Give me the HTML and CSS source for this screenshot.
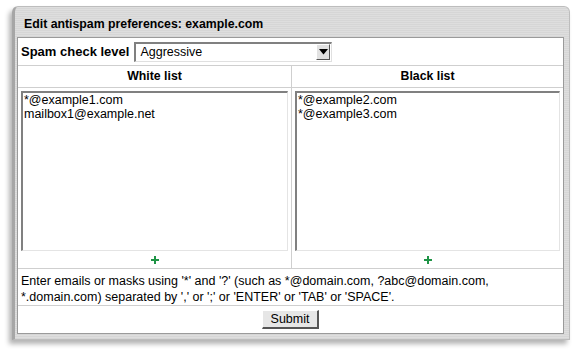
FILE: index.html
```html
<!DOCTYPE html>
<html>
<head>
<meta charset="utf-8">
<link rel="stylesheet" href="styles.css">
</head>
<body>
<div class="window">
  <div class="title">Edit antispam preferences: example.com</div>
  <div class="panel">
    <div class="row level">
      <span class="label">Spam check level</span>
      <div class="select"><span class="sel-text">Aggressive</span><span class="sel-btn"><svg width="9" height="6" viewBox="0 0 9 6"><path d="M0 0H9L4.5 5.5Z" fill="#000"/></svg></span></div>
    </div>
    <div class="lists">
      <div class="col">
        <div class="col-head">White list</div>
        <div class="col-body">
          <div class="textarea">*@example1.com<br>mailbox1@example.net</div>
          <div class="plus"><svg width="8" height="8" viewBox="0 0 8 8"><path d="M3 0H5V3H8V5H5V8H3V5H0V3H3Z" fill="#1f9446"/></svg></div>
        </div>
      </div>
      <div class="col right">
        <div class="col-head">Black list</div>
        <div class="col-body">
          <div class="textarea">*@example2.com<br>*@example3.com</div>
          <div class="plus"><svg width="8" height="8" viewBox="0 0 8 8"><path d="M3 0H5V3H8V5H5V8H3V5H0V3H3Z" fill="#1f9446"/></svg></div>
        </div>
      </div>
    </div>
    <div class="row help">Enter emails or masks using '*' and '?' (such as *@domain.com, ?abc@domain.com,<br>*.domain.com) separated by ',' or ';' or 'ENTER' or 'TAB' or 'SPACE'.</div>
    <div class="row submit-row"><button class="btn">Submit</button></div>
  </div>
</div>
</body>
</html>
```
FILE: styles.css
```css
html, body {
  margin: 0;
  padding: 0;
  background: #fff;
}
body {
  font-family: "Liberation Sans", Arial, sans-serif;
  font-size: 12.5px;
  color: #000;
  min-height: 353px;
}
.window {
  margin: 6px 0 0 12px;
  width: 547px;
  height: 327px;
  padding: 0 5px 5px 2px;
  background: repeating-linear-gradient(#dedede 0, #dedede 1px, #d6d6d6 1px, #d6d6d6 2px);
  border: 1px solid #bdbdbd;
  border-left: 3px solid #a6a6a6;
  border-radius: 6px 6px 0 0;
  box-shadow: -3px 4px 5px rgba(0,0,0,0.3);
  display: flex;
  flex-direction: column;
}
.title {
  height: 30px;
  box-sizing: border-box;
  padding: 9px 0 0 7px;
  line-height: 16px;
  font-weight: bold;
  font-size: 12.3px;
}
.panel {
  flex: 1;
  background: #fff;
  border: 1px solid #9a9a9a;
  display: flex;
  flex-direction: column;
}
.row {
  border-bottom: 1px solid #cfcfcf;
}
.level {
  height: 27px;
  display: flex;
  align-items: center;
  padding-left: 3px;
}
.label {
  font-weight: bold;
  font-size: 13px;
  margin-right: 5px;
}
.select {
  width: 195px;
  height: 17px;
  border-top: 2px solid #808080;
  border-left: 2px solid #808080;
  border-right: 1px solid #e0e0e0;
  border-bottom: 1px solid #e0e0e0;
  display: flex;
  align-items: center;
  justify-content: space-between;
}
.sel-text {
  padding-left: 4px;
}
.sel-btn {
  width: 12px;
  height: 14px;
  background: #e2e2e2;
  border-right: 1px solid #555;
  border-bottom: 1px solid #555;
  border-top: 1px solid #fff;
  border-left: 1px solid #fff;
  display: flex;
  align-items: center;
  justify-content: center;
  margin-right: 1px;
}
.lists {
  display: flex;
  border-bottom: 1px solid #cfcfcf;
  height: 202px;
}
.col {
  flex: 0 0 273px;
  display: flex;
  flex-direction: column;
}
.col.right {
  flex: 1;
  border-left: 1px solid #cfcfcf;
}
.col-head {
  height: 21px;
  line-height: 21px;
  text-align: center;
  font-weight: bold;
  font-size: 12.3px;
  border-bottom: 1px solid #cfcfcf;
}
.col-body {
  flex: 1;
  padding: 3px 3px 0 3px;
  display: flex;
  flex-direction: column;
}
.textarea {
  height: 157px;
  border-top: 2px solid #808080;
  border-left: 2px solid #808080;
  border-right: 1px solid #e4e4e4;
  border-bottom: 1px solid #e4e4e4;
  padding: 0 1px;
  line-height: 14px;
}
.plus {
  flex: 1;
  display: flex;
  align-items: center;
  justify-content: center;
}
.help {
  height: 37px;
  padding: 4px 3px 0 3px;
  box-sizing: border-box;
  line-height: 16px;
}
.submit-row {
  flex: 1;
  border-bottom: none;
  display: flex;
  align-items: center;
  justify-content: center;
}
.btn {
  font-family: "Liberation Sans", Arial, sans-serif;
  font-size: 12.5px;
  height: 19px;
  padding: 0 8px;
  background: #e6e6e6;
  border-top: 1px solid #fff;
  border-left: 1px solid #fff;
  border-right: 2px solid #555;
  border-bottom: 2px solid #555;
}
```
